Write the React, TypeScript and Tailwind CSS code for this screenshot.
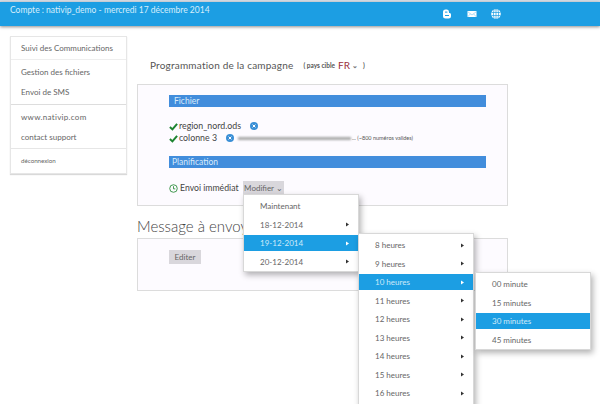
const font = "font-['Lato',sans-serif]";

function Check() {
  return (
    <svg width="9" height="9" viewBox="0 0 10 10" className="shrink-0">
      <path d="M1 5.5 L3.8 8.2 L9 2" fill="none" stroke="#1d8430" strokeWidth="2.2" />
    </svg>
  );
}

function Remove() {
  return (
    <svg width="8" height="8" viewBox="0 0 8 8" className="shrink-0">
      <circle cx="4" cy="4" r="4" fill="#3a8fd6" />
      <path d="M2.6 2.6 L5.4 5.4 M5.4 2.6 L2.6 5.4" stroke="#fff" strokeWidth="1" />
    </svg>
  );
}

function Clock() {
  return (
    <svg width="9" height="9" viewBox="0 0 10 10" className="shrink-0">
      <circle cx="5" cy="5" r="4.2" fill="none" stroke="#2f8f3e" strokeWidth="1" />
      <path d="M5 2.4 V5.4 H7" fill="none" stroke="#2f8f3e" strokeWidth="1" />
    </svg>
  );
}

function BlogIcon() {
  return (
    <svg width="10" height="10" viewBox="0 0 10 10">
      <path d="M1 3 Q1 0.5 3.5 0.5 H5 Q7 0.5 7 3 V4 H7.8 Q9 4 9 5.5 V7 Q9 9.5 6.5 9.5 H3.5 Q1 9.5 1 7 Z" fill="#fff" />
      <rect x="3" y="2.6" width="2.4" height="1" fill="#1c9ee3" />
      <rect x="3" y="6" width="4" height="1" fill="#1c9ee3" />
    </svg>
  );
}

function MailIcon() {
  return (
    <svg width="10" height="8" viewBox="0 0 10 8">
      <rect x="0.5" y="1" width="9" height="6" fill="#fff" />
      <path d="M0.5 1.5 L5 5 L9.5 1.5 M0.5 7 L3.5 3.8 M9.5 7 L6.5 3.8" fill="none" stroke="#7cc4ee" strokeWidth="0.6" />
    </svg>
  );
}

function GlobeIcon() {
  return (
    <svg width="10" height="10" viewBox="0 0 10 10">
      <circle cx="5" cy="5" r="4.8" fill="#fff" />
      <path d="M0.5 3.5 H9.5 M0.5 6.5 H9.5 M5 0 V10 M3 0.8 Q1.8 5 3 9.2 M7 0.8 Q8.2 5 7 9.2" fill="none" stroke="#1c9ee3" strokeWidth="0.7" />
    </svg>
  );
}

function Arrow({ white }: { white?: boolean }) {
  return (
    <svg width="3" height="5" viewBox="0 0 3 5">
      <path d="M0 0.5 L3 2.5 L0 4.5 Z" fill={white ? "#fff" : "#333"} />
    </svg>
  );
}

function MenuRow({
  label,
  arrow,
  active,
  children,
}: {
  label: string;
  arrow?: boolean;
  active?: boolean;
  children?: React.ReactNode;
}) {
  return (
    <div className="relative h-[18.5px] pt-[1px]">
      <div
        className={
          active
            ? "h-4 flex items-center justify-between pl-4 pr-[9px] bg-[#1c9ee3] text-[#cfeaf9]"
            : "h-4 flex items-center justify-between pl-4 pr-[9px] text-[#666]"
        }
      >
        <span>{label}</span>
        {arrow && <Arrow white={active} />}
      </div>
      {children}
    </div>
  );
}

function Menu({ className, children }: { className: string; children: React.ReactNode }) {
  return (
    <div
      className={
        "absolute w-[116px] bg-white border border-[#d8d8d8] pt-[2px] text-[8px] font-normal whitespace-nowrap shadow-[2px_3px_6px_rgba(0,0,0,0.3)] z-10 " +
        className
      }
    >
      {children}
    </div>
  );
}

export default function App() {
  return (
    <div className={`h-[404px] w-[600px] overflow-hidden bg-white text-[#444] relative ${font}`}>
      <div className="h-[2px] bg-[#d5dde6]" />
      <header className="h-6 bg-[#1c9ee3] shadow-[0_1px_3px_rgba(0,0,0,0.45)] flex items-start pl-[10px] pr-[99px] text-[8.5px] text-[#d6eefb]">
        <span className="mt-[2px]">Compte : nativip_demo - mercredi 17 décembre 2014</span>
        <div className="ml-auto mt-[7px] flex items-center gap-[14.5px]">
          <BlogIcon />
          <MailIcon />
          <GlobeIcon />
        </div>
      </header>

      <div className="flex items-start pl-[10px] pt-[10px] gap-[10px]">
        <nav className="w-[117px] h-[138px] bg-white border border-[#e6e6e6] shadow-[0_1px_1px_rgba(0,0,0,0.15)] text-[8px] text-[#666]">
          <div className="h-[23px] flex items-center pl-[10px] border-b border-[#eeeeee] whitespace-nowrap">Suivi des Communications</div>
          <div className="h-[45px] flex flex-col justify-center gap-[8px] pl-[10px] border-b border-[#dddddd]">
            <span>Gestion des fichiers</span>
            <span>Envoi de SMS</span>
          </div>
          <div className="h-[44px] flex flex-col justify-center gap-[8px] pl-[10px] border-b border-[#e6e6e6]">
            <span className="tracking-[0.3px]">www.nativip.com</span>
            <span>contact support</span>
          </div>
          <div className="h-6 flex items-center pl-[10px] text-[6.2px]">déconnexion</div>
        </nav>

        <main className="w-[371px]">
          <div className="h-[48px] pt-[22px] pl-[13px] flex items-start">
            <h1 className="text-[10px] tracking-[0.2px] leading-[15px] text-[#555] font-normal">Programmation de la campagne</h1>
            <span className="ml-[10px] mt-[2px] flex items-center text-[6.5px] leading-[11px] font-bold text-[#555]">
              ( pays cible
              <span className="ml-[3px] text-[10px] font-normal text-[#9c2f3c]">FR</span>
              <span className="ml-[2px] text-[#777]">⌄</span>
              <span className="ml-[5px]">)</span>
            </span>
          </div>

          <section className="h-[122px] bg-[#fdfbff] border border-[#dcdcdc] pl-[31px] pr-[21px] pt-[10px]">
            <div className="h-3 bg-[#428ddc] text-[#d9ebfb] text-[8.5px] leading-3 pl-[5px]">Fichier</div>
            <div className="mt-[13px] h-3 flex items-center text-[8.8px] text-[#444]">
              <Check />
              <span className="ml-[1px]">region_nord.ods</span>
              <span className="ml-[9px]"><Remove /></span>
            </div>
            <div className="h-3 flex items-center text-[8.8px] text-[#444]">
              <Check />
              <span className="ml-[1px]">colonne 3</span>
              <span className="ml-[9px]"><Remove /></span>
              <span className="ml-[4px] w-[113px] h-[3px] bg-[#a9a9a9] blur-[1px] shrink-0" />
              <span className="ml-[1px] text-[5.5px] text-[#555] whitespace-nowrap">... (~800 numéros valides)</span>
            </div>
            <div className="mt-3 h-3 bg-[#428ddc] text-[#d9ebfb] text-[8.5px] leading-3 pl-[3px]">Planification</div>
            <div className="mt-[13px] h-[14px] flex items-center text-[8.7px] text-[#444]">
              <Clock />
              <span className="ml-[2px] w-[63px] whitespace-nowrap">Envoi immédiat</span>
              <div className="relative">
                <button className="w-[41px] h-[14px] bg-[#d9d7dc] text-[8px] text-[#666] flex items-center justify-center whitespace-nowrap">
                  Modifier ⌄
                </button>
                <Menu className="left-0 top-[13px]">
                  <MenuRow label="Maintenant" />
                  <MenuRow label="18-12-2014" arrow />
                  <MenuRow label="19-12-2014" arrow active>
                    <Menu className="left-[114px] top-[-1px] pb-[4px]">
                      <MenuRow label="8 heures" arrow />
                      <MenuRow label="9 heures" arrow />
                      <MenuRow label="10 heures" arrow active>
                        <Menu className="left-[116px] top-[-1px]">
                          <MenuRow label="00 minute" />
                          <MenuRow label="15 minutes" />
                          <MenuRow label="30 minutes" active />
                          <MenuRow label="45 minutes" />
                        </Menu>
                      </MenuRow>
                      <MenuRow label="11 heures" arrow />
                      <MenuRow label="12 heures" arrow />
                      <MenuRow label="13 heures" arrow />
                      <MenuRow label="14 heures" arrow />
                      <MenuRow label="15 heures" arrow />
                      <MenuRow label="16 heures" arrow />
                    </Menu>
                  </MenuRow>
                  <MenuRow label="20-12-2014" arrow />
                </Menu>
              </div>
            </div>
          </section>

          <h2 className="mt-[10px] h-[22px] text-[15px] leading-5 font-light text-[#444] whitespace-nowrap">Message à envoyer</h2>
          <section className="h-[53px] bg-[#fdfbff] border border-[#dcdcdc] pl-[31px] pt-[11px]">
            <button className="w-8 h-[14px] bg-[#d9d7dc] text-[8px] text-[#666] flex items-center justify-center">Editer</button>
          </section>
        </main>
      </div>
    </div>
  );
}
